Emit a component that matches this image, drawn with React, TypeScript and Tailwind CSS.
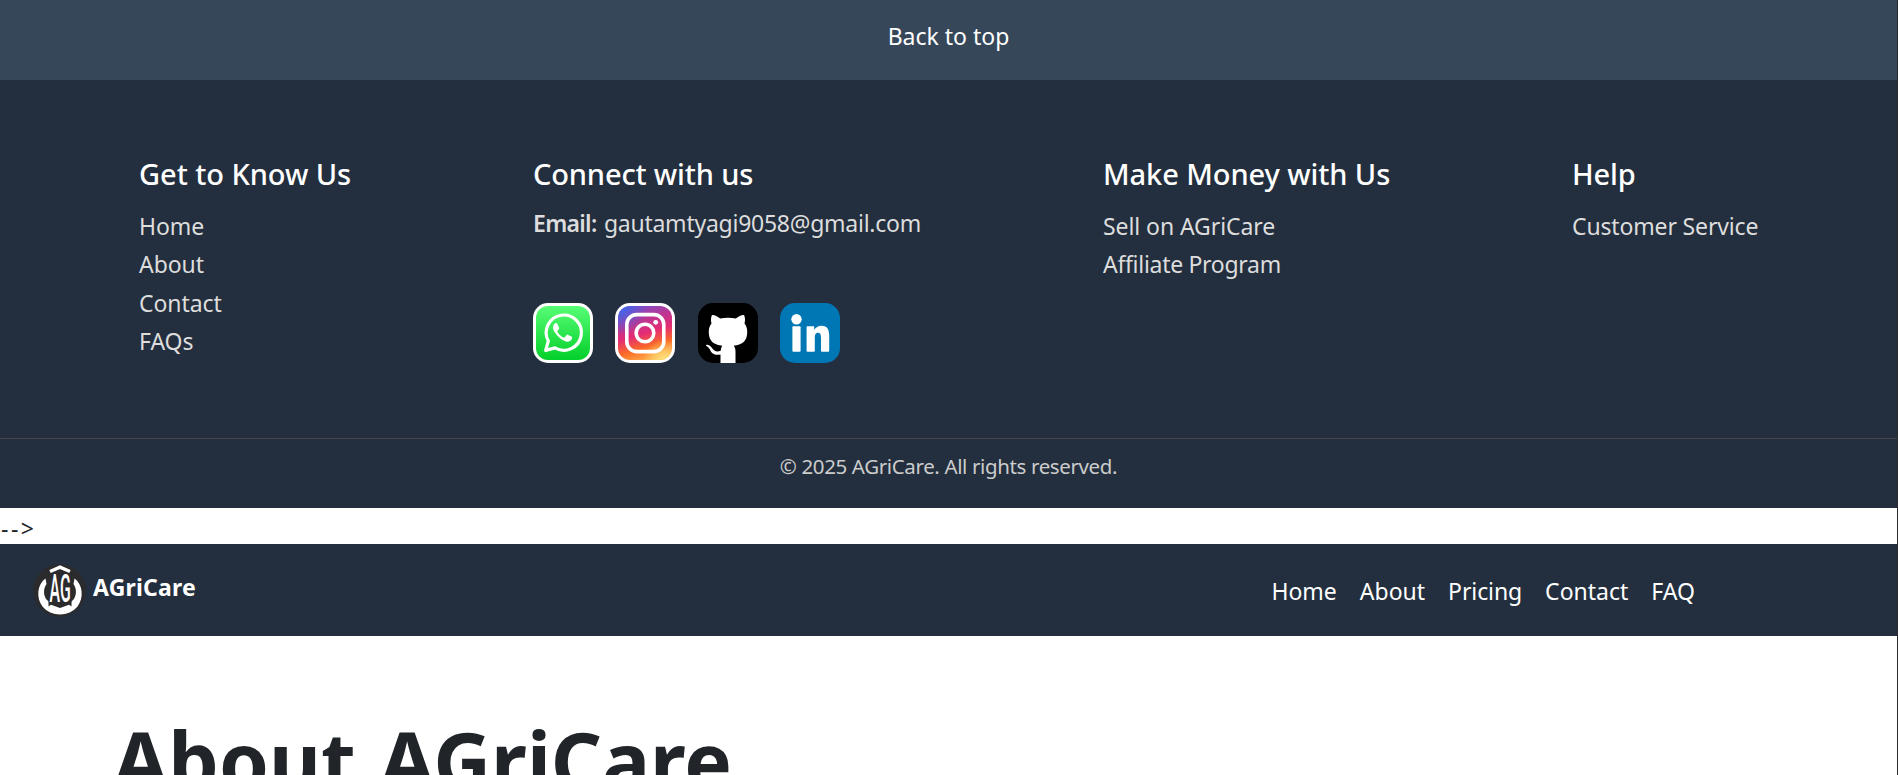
import type { ReactNode } from "react";

function BrandLogo() {
  return (
    <svg className="mt-[1px] h-[53px] w-[53px] shrink-0" viewBox="0 0 53 53" aria-hidden="true">
      <circle cx="26.5" cy="26.5" r="26.3" fill="#2b2b2d" />
      <path
        d="M12.500 14.500C4 20.500 3 34 9.500 42.500C18 53 36 53 44.500 42.500C51 34 50 20.500 41.500 14.500L40.500 20C44 25 43.500 31.500 40.500 35.500L38.500 37.500V42.500L36 40.800L27 44L18 40.800L15.500 42.500V37.500L13.500 35.500C10.500 31.500 10 25 13.500 20Z"
        fill="#fff"
      />
      <path d="M15.700 9V38.500L27 42L38.300 38.500V9L27 4Z" fill="#2b2b2d" />
      <path d="M17 7.500L27 3.200L37 7.500" fill="none" stroke="#fff" strokeWidth="3.400" />
      <text
        transform="translate(16.500 38.200) scale(.46 1)"
        className="font-['Roboto']"
        fontSize="38"
        fontWeight="500"
        fill="#fff"
        textLength="46"
        lengthAdjust="spacingAndGlyphs"
      >
        AG
      </text>
    </svg>
  );
}

function WhatsappIcon() {
  return (
    <svg className="h-[60px] w-[60px]" viewBox="0 0 60 60" aria-hidden="true">
      <defs>
        <linearGradient id="wa" x1="0" y1="0" x2="0" y2="1">
          <stop offset="0" stopColor="#57fd75" />
          <stop offset="1" stopColor="#03cf2a" />
        </linearGradient>
      </defs>
      <rect width="60" height="60" rx="15" fill="#fff" />
      <rect x="3" y="3" width="54" height="54" rx="12" fill="url(#wa)" />
      <path
        d="M12.700 47.400L15.300 38A17.600 17.600 0 1 1 22 44.900Z"
        fill="none"
        stroke="#fff"
        strokeWidth="3.200"
        strokeLinejoin="round"
      />
      <path
        d="M23.600 20.200C22.900 19.900 21.800 20.200 21.300 21C19.300 23.200 20 26.500 21.800 29.300C24.500 33.400 28 37 33 38.500C35.500 39.200 38.300 37.800 39 35.800C39.300 34.900 39.300 34 38.800 33.700L34.800 31.700C34.200 31.500 33.800 31.700 33.400 32.200L31.800 34.200C31.500 34.600 31 34.600 30.500 34.400C27.700 33.200 25.700 31 24.500 28.900C24.200 28.400 24.400 28 24.700 27.600L26 25.900C26.300 25.400 26.200 25 26 24.500L24.300 20.800Z"
        fill="#fff"
      />
    </svg>
  );
}

function InstagramIcon() {
  return (
    <svg className="h-[60px] w-[60px]" viewBox="0 0 60 60" aria-hidden="true">
      <defs>
        <linearGradient id="ig" x1=".3" y1="0" x2=".6" y2="1">
          <stop offset="0" stopColor="#7b4fc9" />
          <stop offset=".28" stopColor="#bd3592" />
          <stop offset=".52" stopColor="#e42d73" />
          <stop offset=".76" stopColor="#fb6a27" />
          <stop offset="1" stopColor="#fdb04c" />
        </linearGradient>
        <radialGradient id="igBlue" cx="0" cy="0" r=".55">
          <stop offset="0" stopColor="#3a67ee" />
          <stop offset="1" stopColor="#3a67ee" stopOpacity="0" />
        </radialGradient>
        <radialGradient id="igGold" cx=".85" cy="1" r=".38">
          <stop offset="0" stopColor="#ffe27d" />
          <stop offset="1" stopColor="#ffe27d" stopOpacity="0" />
        </radialGradient>
      </defs>
      <rect width="60" height="60" rx="15" fill="#fff" />
      <rect x="3" y="3" width="54" height="54" rx="12" fill="url(#ig)" />
      <rect x="3" y="3" width="54" height="54" rx="12" fill="url(#igBlue)" />
      <rect x="3" y="3" width="54" height="54" rx="12" fill="url(#igGold)" />
      <rect x="11.800" y="11.600" width="37" height="37" rx="10" fill="none" stroke="#fff" strokeWidth="3.600" />
      <circle cx="30" cy="30" r="8.800" fill="none" stroke="#fff" strokeWidth="3.600" />
      <circle cx="40.700" cy="19.300" r="2.400" fill="#fff" />
    </svg>
  );
}

function GithubIcon() {
  return (
    <svg className="h-[60px] w-[60px]" viewBox="0 0 60 60" aria-hidden="true">
      <rect width="60" height="60" rx="15" fill="#000" />
      <path
        d="M13.800 12.200C16 11.700 19.500 13.700 22.200 15.600C27 14.300 33 14.300 37.800 15.600C40.500 13.700 44 11.700 46.200 12.200C47.300 15 47.200 18 46.500 20.500C48.600 23 49.400 26 49.200 30C48.800 38.500 44 41.800 35.600 42.800C37.200 44.500 37.500 46.500 37.500 49V60H22.500V51.600C16 52.400 13.900 50.500 12.400 47.500C11.400 45.200 10 43.800 8.300 42.900C7.600 42 8.600 41.500 9.700 41.700C12.300 42.200 13.500 44.300 14.800 46.100C16.600 48.700 19.500 49 22.700 47.800C22.900 45.700 23.300 44 24.400 42.800C16 41.800 11.200 38.500 10.800 30C10.600 26 11.400 23 13.500 20.500C12.800 18 12.700 15 13.800 12.200Z"
        fill="#fff"
      />
    </svg>
  );
}

function LinkedinIcon() {
  return (
    <svg className="h-[60px] w-[60px]" viewBox="0 0 60 60" aria-hidden="true">
      <rect width="60" height="60" rx="15" fill="#0077b5" />
      <circle cx="16.500" cy="16.300" r="5.200" fill="#fff" />
      <rect x="12.400" y="23.300" width="8.200" height="25.500" rx="1" fill="#fff" />
      <path
        d="M27 23.300H34.200V26.800C35.600 24.500 38.200 22.700 41.500 22.700C47.500 22.700 49.200 26.700 49.200 33V47.800Q49.200 48.800 48.200 48.800H42Q41 48.800 41 47.800V35.300C41 32 40.400 29.800 38 29.800C35.500 29.800 34.800 32 34.800 35.300V47.800Q34.800 48.800 33.800 48.800H27.600Q26.600 48.800 26.600 47.800V23.800Z"
        fill="#fff"
      />
    </svg>
  );
}

function Column({ title, className, children }: { title: string; className: string; children: ReactNode }) {
  return (
    <div className={`shrink-0 ${className}`}>
      <h3 className="text-[29px] leading-9 font-medium text-white">{title}</h3>
      {children}
    </div>
  );
}

function Links({ items }: { items: string[] }) {
  return (
    <ul className="mt-[15px] leading-[38.4px]">
      {items.map((item) => (
        <li key={item} className={item === "Affiliate Program" ? "tracking-[-0.3px]" : ""}>
          <a href="#">{item}</a>
        </li>
      ))}
    </ul>
  );
}

export default function App() {
  return (
    <div className="h-[775px] overflow-hidden border-r border-[#2a2a2a] bg-white font-['Noto_Sans','Open_Sans',sans-serif] text-[23px] leading-9 whitespace-nowrap text-[#212529]">
      <div className="h-20 bg-[#37475a] pt-[18px] text-center text-white">
        <a href="#">Back to top</a>
      </div>

      <footer className="bg-[#232f3e] text-[#dddddd]">
        <div className="flex h-[358px] gap-[182px] pt-[76px] pl-[139px]">
          <Column title="Get to Know Us" className="w-[212px] tracking-[-0.05px]">
            <Links items={["Home", "About", "Contact", "FAQs"]} />
          </Column>
          <Column title="Connect with us" className="w-[388px] tracking-[-0.15px]">
            <p className="mt-[13px] flex">
              <strong className="w-[71px] font-semibold tracking-[-0.7px]">Email:</strong>
              <span className="tracking-[-0.25px]">gautamtyagi9058@gmail.com</span>
            </p>
            <div className="mt-[62px] flex gap-[22.300px]">
              <WhatsappIcon />
              <InstagramIcon />
              <GithubIcon />
              <LinkedinIcon />
            </div>
          </Column>
          <Column title="Make Money with Us" className="w-[287px] tracking-[-0.08px]">
            <Links items={["Sell on AGriCare", "Affiliate Program"]} />
          </Column>
          <Column title="Help" className="w-[187px] tracking-[-0.15px]">
            <Links items={["Customer Service"]} />
          </Column>
        </div>
        <div className="h-[70px] border-t border-[#444444] pt-[11px] text-center text-[20.500px] leading-8 tracking-[-0.37px] text-[#cccccc]">
          © 2025 AGriCare. All rights reserved.
        </div>
      </footer>

      <div className="h-9 pt-[2px] pl-[1px] tracking-[2.500px]">--&gt;</div>

      <nav className="flex h-[92px] justify-between bg-[#232f3e] pr-[202px] pl-[33px] text-white">
        <a href="#" className="flex pt-[19px]">
          <BrandLogo />
          <span className="mt-[6px] ml-[7px] font-bold tracking-[0.200px]">AGriCare</span>
        </a>
        <div className="flex gap-[23px] pt-[29px]">
          <a href="#">Home</a>
          <a href="#">About</a>
          <a href="#" className="tracking-[-0.1px]">Pricing</a>
          <a href="#">Contact</a>
          <a href="#">FAQ</a>
        </div>
      </nav>

      <main className="pt-[76px] pl-[113px]">
        <h1 className="text-[80px] leading-[96px] font-bold [word-spacing:3px]">About AGriCare</h1>
      </main>
    </div>
  );
}
